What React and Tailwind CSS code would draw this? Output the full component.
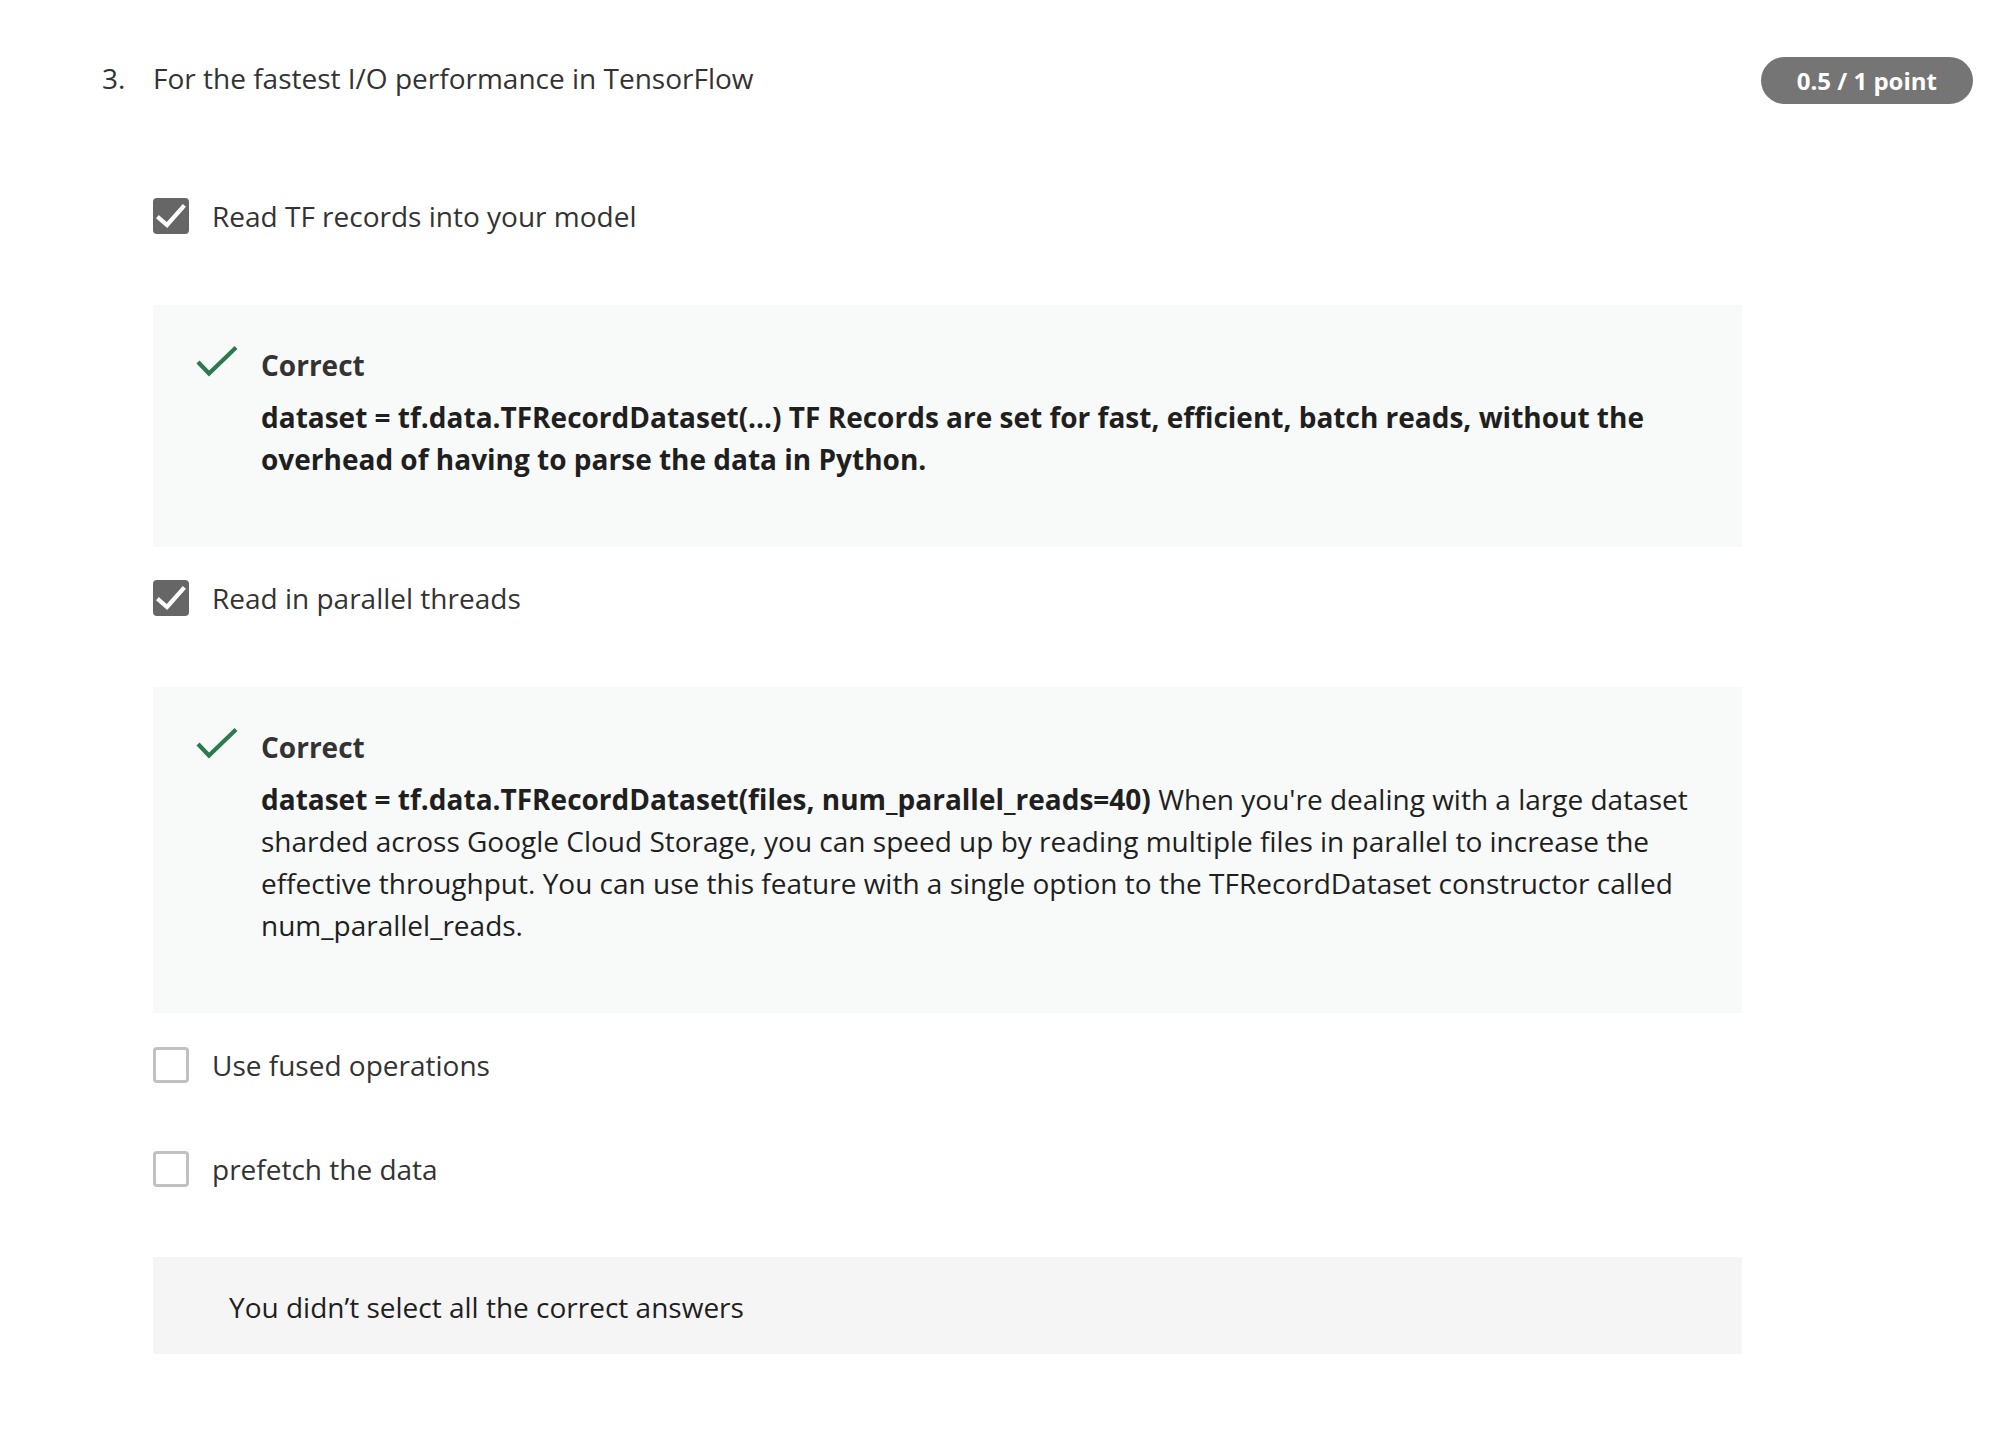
import { Fragment } from 'react'

const FONT = "font-['Open_Sans',sans-serif]"

function CheckedBox() {
  return (
    <span className="w-[36px] h-[36px] shrink-0 rounded-[4px] bg-[#666666] flex items-center justify-center">
      <svg width="36" height="36" viewBox="0 0 36 36" fill="none">
        <polyline points="6,20 14,27 30,9" stroke="white" strokeWidth="4.2" strokeLinecap="square" />
      </svg>
    </span>
  )
}

function EmptyBox() {
  return <span className="w-[36px] h-[36px] shrink-0 rounded-[4px] border-[3px] border-[#c1c1c1] bg-white" />
}

function Option({ checked, label, className }) {
  return (
    <div className={`flex items-center h-[42px] ${className}`}>
      {checked ? <CheckedBox /> : <EmptyBox />}
      <span className="ml-[23px] text-[28px] leading-[42px] text-[#333333]">{label}</span>
    </div>
  )
}

function Feedback({ children, className }) {
  return (
    <div className={`bg-[#f8f9f9] pl-[43px] pr-[40px] pt-[39px] pb-[67px] flex ${className}`}>
      <div className="w-[65px] shrink-0 pt-[1px]">
        <svg width="42" height="32" viewBox="0 0 42 32" fill="none">
          <polyline points="2,17 13,28.5 40,2.5" stroke="#2d7a4e" strokeWidth="4.2" />
        </svg>
      </div>
      <div className="flex-1">
        <div className="text-[28px] leading-[42px] font-bold text-[#333333]">Correct</div>
        <p className="mt-[10px] text-[28px] leading-[42px] text-[#1f1f1f]">{children}</p>
      </div>
    </div>
  )
}

export default function App() {
  return (
    <div className={`min-h-screen bg-white ${FONT} pl-[102px] pr-[21px] pt-[57px]`}>
      <div className="flex items-center justify-between h-[47px]">
        <div className="self-start flex text-[28px] leading-[42px] text-[#333333]">
          <span className="w-[51px]">3.</span>
          <span>For the fastest I/O performance in TensorFlow</span>
        </div>
        <span className="h-[47px] px-[36px] rounded-full bg-[#757575] text-white text-[24px] font-bold flex items-center">
          0.5 / 1 point
        </span>
      </div>

      <div className="ml-[51px] w-[1589px]">
        <Option checked label="Read TF records into your model" className="mt-[91px]" />
        <Feedback className="mt-[68px]">
          <span className="font-bold">
            dataset = tf.data.TFRecordDataset(...) TF Records are set for fast, efficient, batch reads, without the overhead of having to parse the data in Python.
          </span>
        </Feedback>

        <Option checked label="Read in parallel threads" className="mt-[30px]" />
        <Feedback className="mt-[68px]">
          <Fragment>
            <span className="font-bold">dataset = tf.data.TFRecordDataset(files, num_parallel_reads=40)</span>{' '}
            When you're dealing with a large dataset sharded across Google Cloud Storage, you can speed up by reading multiple files in parallel to increase the effective throughput. You can use this feature with a single option to the TFRecordDataset constructor called num_parallel_reads.
          </Fragment>
        </Feedback>

        <Option label="Use fused operations" className="mt-[31px]" />
        <Option label="prefetch the data" className="mt-[62px]" />

        <div className="mt-[67px] bg-[#f5f5f5] pl-[76px] pt-[29px] pb-[26px] text-[28px] leading-[42px] text-[#1f1f1f]">
          You didn’t select all the correct answers
        </div>
      </div>
    </div>
  )
}
